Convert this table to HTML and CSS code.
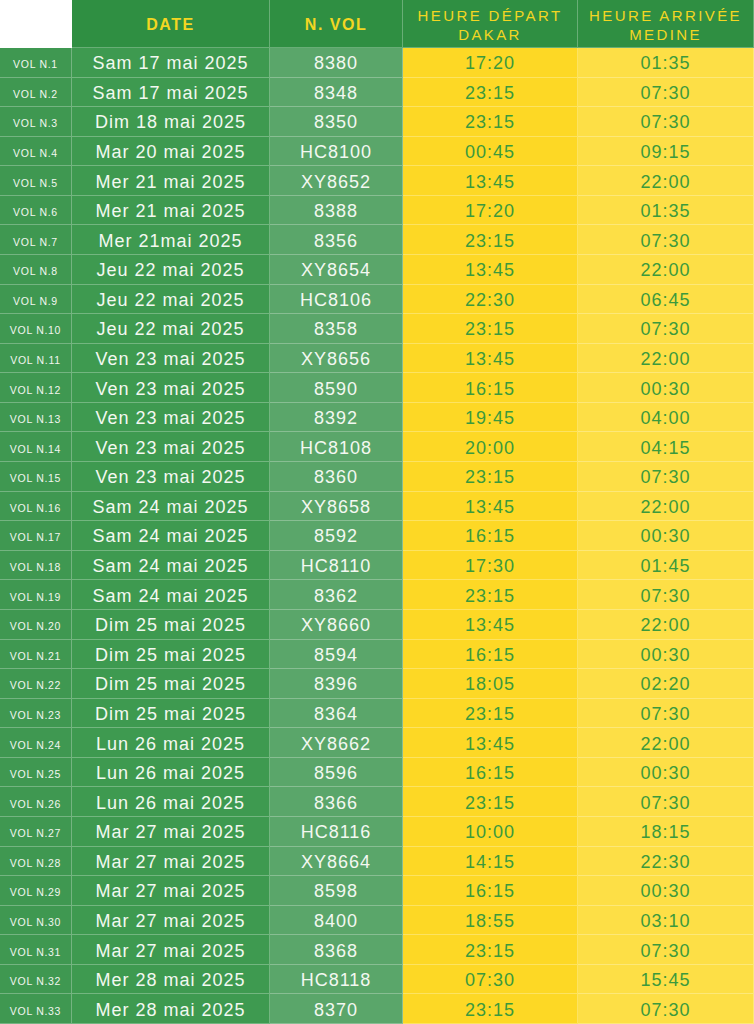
FILE: index.html
```html
<!DOCTYPE html>
<html lang="fr">
<head>
<meta charset="utf-8">
<title>Vols Dakar - Medine</title>
<link rel="stylesheet" href="styles.css">
</head>
<body>
<div class="schedule">
  <div class="hcell blank"></div>
  <div class="hcell bold">DATE</div>
  <div class="hcell bold">N. VOL</div>
  <div class="hcell light">HEURE DÉPART<br>DAKAR</div>
  <div class="hcell light">HEURE ARRIVÉE<br>MEDINE</div>

  <div class="c lbl">VOL N.1</div><div class="c dt">Sam 17 mai 2025</div><div class="c nv">8380</div><div class="c dep">17:20</div><div class="c arr">01:35</div>
  <div class="c lbl">VOL N.2</div><div class="c dt">Sam 17 mai 2025</div><div class="c nv">8348</div><div class="c dep">23:15</div><div class="c arr">07:30</div>
  <div class="c lbl">VOL N.3</div><div class="c dt">Dim 18 mai 2025</div><div class="c nv">8350</div><div class="c dep">23:15</div><div class="c arr">07:30</div>
  <div class="c lbl">VOL N.4</div><div class="c dt">Mar 20 mai 2025</div><div class="c nv">HC8100</div><div class="c dep">00:45</div><div class="c arr">09:15</div>
  <div class="c lbl">VOL N.5</div><div class="c dt">Mer 21 mai 2025</div><div class="c nv">XY8652</div><div class="c dep">13:45</div><div class="c arr">22:00</div>
  <div class="c lbl">VOL N.6</div><div class="c dt">Mer 21 mai 2025</div><div class="c nv">8388</div><div class="c dep">17:20</div><div class="c arr">01:35</div>
  <div class="c lbl">VOL N.7</div><div class="c dt">Mer 21mai 2025</div><div class="c nv">8356</div><div class="c dep">23:15</div><div class="c arr">07:30</div>
  <div class="c lbl">VOL N.8</div><div class="c dt">Jeu 22 mai 2025</div><div class="c nv">XY8654</div><div class="c dep">13:45</div><div class="c arr">22:00</div>
  <div class="c lbl">VOL N.9</div><div class="c dt">Jeu 22 mai 2025</div><div class="c nv">HC8106</div><div class="c dep">22:30</div><div class="c arr">06:45</div>
  <div class="c lbl">VOL N.10</div><div class="c dt">Jeu 22 mai 2025</div><div class="c nv">8358</div><div class="c dep">23:15</div><div class="c arr">07:30</div>
  <div class="c lbl">VOL N.11</div><div class="c dt">Ven 23 mai 2025</div><div class="c nv">XY8656</div><div class="c dep">13:45</div><div class="c arr">22:00</div>
  <div class="c lbl">VOL N.12</div><div class="c dt">Ven 23 mai 2025</div><div class="c nv">8590</div><div class="c dep">16:15</div><div class="c arr">00:30</div>
  <div class="c lbl">VOL N.13</div><div class="c dt">Ven 23 mai 2025</div><div class="c nv">8392</div><div class="c dep">19:45</div><div class="c arr">04:00</div>
  <div class="c lbl">VOL N.14</div><div class="c dt">Ven 23 mai 2025</div><div class="c nv">HC8108</div><div class="c dep">20:00</div><div class="c arr">04:15</div>
  <div class="c lbl">VOL N.15</div><div class="c dt">Ven 23 mai 2025</div><div class="c nv">8360</div><div class="c dep">23:15</div><div class="c arr">07:30</div>
  <div class="c lbl">VOL N.16</div><div class="c dt">Sam 24 mai 2025</div><div class="c nv">XY8658</div><div class="c dep">13:45</div><div class="c arr">22:00</div>
  <div class="c lbl">VOL N.17</div><div class="c dt">Sam 24 mai 2025</div><div class="c nv">8592</div><div class="c dep">16:15</div><div class="c arr">00:30</div>
  <div class="c lbl">VOL N.18</div><div class="c dt">Sam 24 mai 2025</div><div class="c nv">HC8110</div><div class="c dep">17:30</div><div class="c arr">01:45</div>
  <div class="c lbl">VOL N.19</div><div class="c dt">Sam 24 mai 2025</div><div class="c nv">8362</div><div class="c dep">23:15</div><div class="c arr">07:30</div>
  <div class="c lbl">VOL N.20</div><div class="c dt">Dim 25 mai 2025</div><div class="c nv">XY8660</div><div class="c dep">13:45</div><div class="c arr">22:00</div>
  <div class="c lbl">VOL N.21</div><div class="c dt">Dim 25 mai 2025</div><div class="c nv">8594</div><div class="c dep">16:15</div><div class="c arr">00:30</div>
  <div class="c lbl">VOL N.22</div><div class="c dt">Dim 25 mai 2025</div><div class="c nv">8396</div><div class="c dep">18:05</div><div class="c arr">02:20</div>
  <div class="c lbl">VOL N.23</div><div class="c dt">Dim 25 mai 2025</div><div class="c nv">8364</div><div class="c dep">23:15</div><div class="c arr">07:30</div>
  <div class="c lbl">VOL N.24</div><div class="c dt">Lun 26 mai 2025</div><div class="c nv">XY8662</div><div class="c dep">13:45</div><div class="c arr">22:00</div>
  <div class="c lbl">VOL N.25</div><div class="c dt">Lun 26 mai 2025</div><div class="c nv">8596</div><div class="c dep">16:15</div><div class="c arr">00:30</div>
  <div class="c lbl">VOL N.26</div><div class="c dt">Lun 26 mai 2025</div><div class="c nv">8366</div><div class="c dep">23:15</div><div class="c arr">07:30</div>
  <div class="c lbl">VOL N.27</div><div class="c dt">Mar 27 mai 2025</div><div class="c nv">HC8116</div><div class="c dep">10:00</div><div class="c arr">18:15</div>
  <div class="c lbl">VOL N.28</div><div class="c dt">Mar 27 mai 2025</div><div class="c nv">XY8664</div><div class="c dep">14:15</div><div class="c arr">22:30</div>
  <div class="c lbl">VOL N.29</div><div class="c dt">Mar 27 mai 2025</div><div class="c nv">8598</div><div class="c dep">16:15</div><div class="c arr">00:30</div>
  <div class="c lbl">VOL N.30</div><div class="c dt">Mar 27 mai 2025</div><div class="c nv">8400</div><div class="c dep">18:55</div><div class="c arr">03:10</div>
  <div class="c lbl">VOL N.31</div><div class="c dt">Mar 27 mai 2025</div><div class="c nv">8368</div><div class="c dep">23:15</div><div class="c arr">07:30</div>
  <div class="c lbl">VOL N.32</div><div class="c dt">Mer 28 mai 2025</div><div class="c nv">HC8118</div><div class="c dep">07:30</div><div class="c arr">15:45</div>
  <div class="c lbl">VOL N.33</div><div class="c dt">Mer 28 mai 2025</div><div class="c nv">8370</div><div class="c dep">23:15</div><div class="c arr">07:30</div>
</div>
</body>
</html>
```

FILE: styles.css
```css
html, body {
  margin: 0;
  padding: 0;
  background: #ffffff;
}

.schedule {
  display: grid;
  grid-template-columns: 72px 198px 133px 175px 176px;
  grid-template-rows: 48px repeat(33, 1fr);
  width: 754px;
  height: 1024px;
  font-family: "Liberation Sans", Arial, sans-serif;
}

.hcell,
.c {
  box-sizing: border-box;
  display: flex;
  align-items: center;
  justify-content: center;
  text-align: center;
  border-right: 1px solid rgba(255, 255, 255, 0.28);
  border-bottom: 1px solid rgba(255, 255, 255, 0.28);
  white-space: nowrap;
}

.hcell {
  background: #2f8f42;
  color: #f3d622;
}

.hcell.blank {
  background: #ffffff;
  border: none;
}

.hcell.bold {
  font-weight: bold;
  font-size: 16px;
  letter-spacing: 1.5px;
  padding-top: 2px;
}

.hcell.light {
  font-size: 15px;
  line-height: 19px;
  letter-spacing: 2.4px;
  padding-top: 2px;
}

.c {
  font-size: 18px;
  letter-spacing: 1px;
  padding-top: 3px;
}

.c.lbl {
  background: #3f9851;
  color: #f1f6ef;
  font-size: 10.5px;
  letter-spacing: 0.7px;
  padding-top: 4px;
}

.c.dt {
  background: #3e9a50;
  color: #f3f8f1;
}

.c.nv {
  background: #5aa66a;
  color: #f3f8f1;
}

.c.dep {
  background: #fdd825;
  color: #3b9a3d;
}

.c.arr {
  background: #fddf46;
  color: #3b9a3d;
}
```
